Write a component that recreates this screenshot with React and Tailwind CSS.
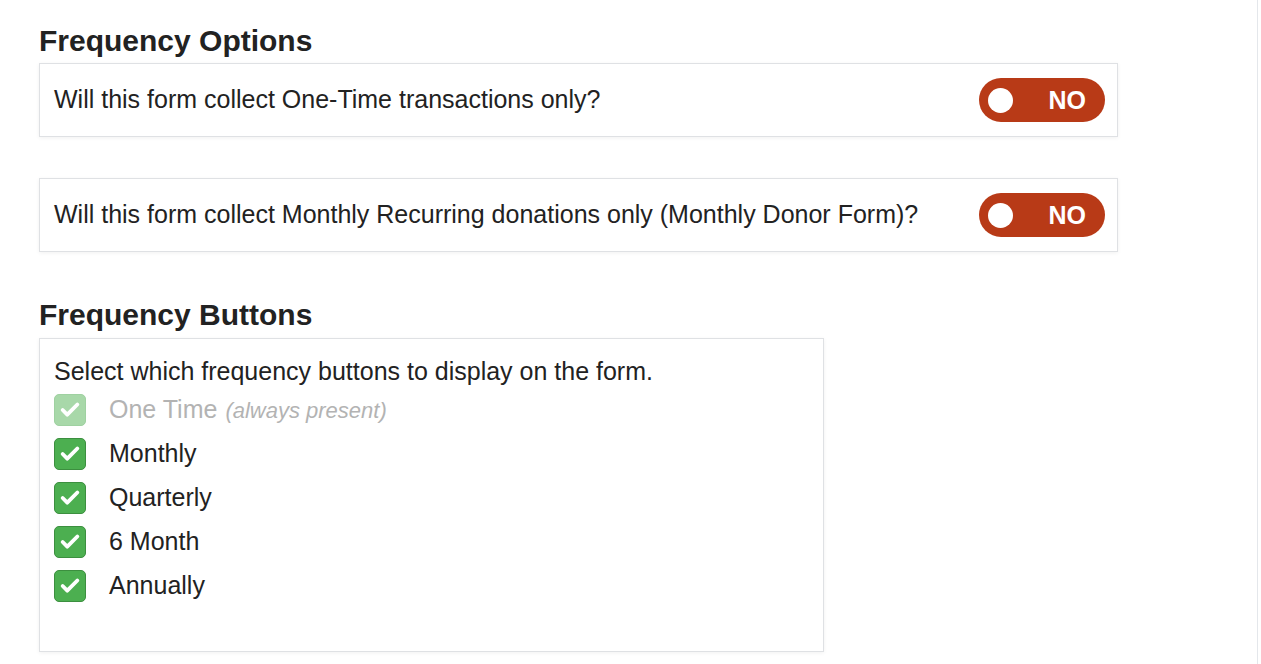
import { Check } from 'lucide-react';

const font = { fontFamily: '"Liberation Sans", Arial, sans-serif' };

function Toggle() {
  return (
    <div className="flex items-center w-[126px] h-[44px] rounded-full bg-[#b83a17] shrink-0 pl-[9px]">
      <span className="w-[25px] h-[25px] rounded-full bg-white" />
      <span className="ml-auto mr-[19px] text-white font-bold text-[25px] leading-none">NO</span>
    </div>
  );
}

function OptionCard({ label, className = '' }) {
  return (
    <div className={`w-[1079px] h-[74px] flex items-center justify-between pl-[14px] pr-[12px] bg-white border border-[#dfe1e4] shadow-[0_1px_4px_rgba(0,0,0,0.06)] ${className}`}>
      <p className="text-[25px] text-[#222]">{label}</p>
      <Toggle />
    </div>
  );
}

function CheckRow({ label, disabled, note }) {
  return (
    <div className="flex items-center h-[32px] mb-[12px]">
      <span className={`w-[32px] h-[32px] rounded-[5px] flex items-center justify-center border ${disabled ? 'bg-[#a8d8a9] border-[#9fd1a1]' : 'bg-[#4caf50] border-[#3c8f3f]'}`}>
        <Check size={22} strokeWidth={4.2} className="text-white" />
      </span>
      <span className={`ml-[23px] text-[25px] ${disabled ? 'text-[#b3b3b3]' : 'text-[#222]'}`}>
        {label}
        {note && <em className="text-[22px] ml-[8px]">{note}</em>}
      </span>
    </div>
  );
}

export default function App() {
  const buttons = ['Monthly', 'Quarterly', '6 Month', 'Annually'];

  return (
    <div className="flex bg-white min-h-[664px]" style={font}>
      <div className="w-[1258px] min-h-[664px] border-r border-[#e4e7eb] pl-[39px] pt-[23px]">
        <h2 className="text-[30px] font-bold text-[#222] leading-[36px] mb-[4px]">Frequency Options</h2>
        <OptionCard label="Will this form collect One-Time transactions only?" />
        <OptionCard className="mt-[41px]" label="Will this form collect Monthly Recurring donations only (Monthly Donor Form)?" />

        <h2 className="text-[30px] font-bold text-[#222] leading-[36px] mt-[45px] mb-[5px]">Frequency Buttons</h2>
        <div className="w-[785px] h-[314px] bg-white border border-[#dfe1e4] shadow-[0_1px_4px_rgba(0,0,0,0.06)] px-[14px] pt-[16px]">
          <p className="text-[25px] text-[#222] leading-[33px] mb-[6px]">Select which frequency buttons to display on the form.</p>
          <CheckRow label="One Time" note="(always present)" disabled />
          {buttons.map((b) => (
            <CheckRow key={b} label={b} />
          ))}
        </div>
      </div>
    </div>
  );
}
